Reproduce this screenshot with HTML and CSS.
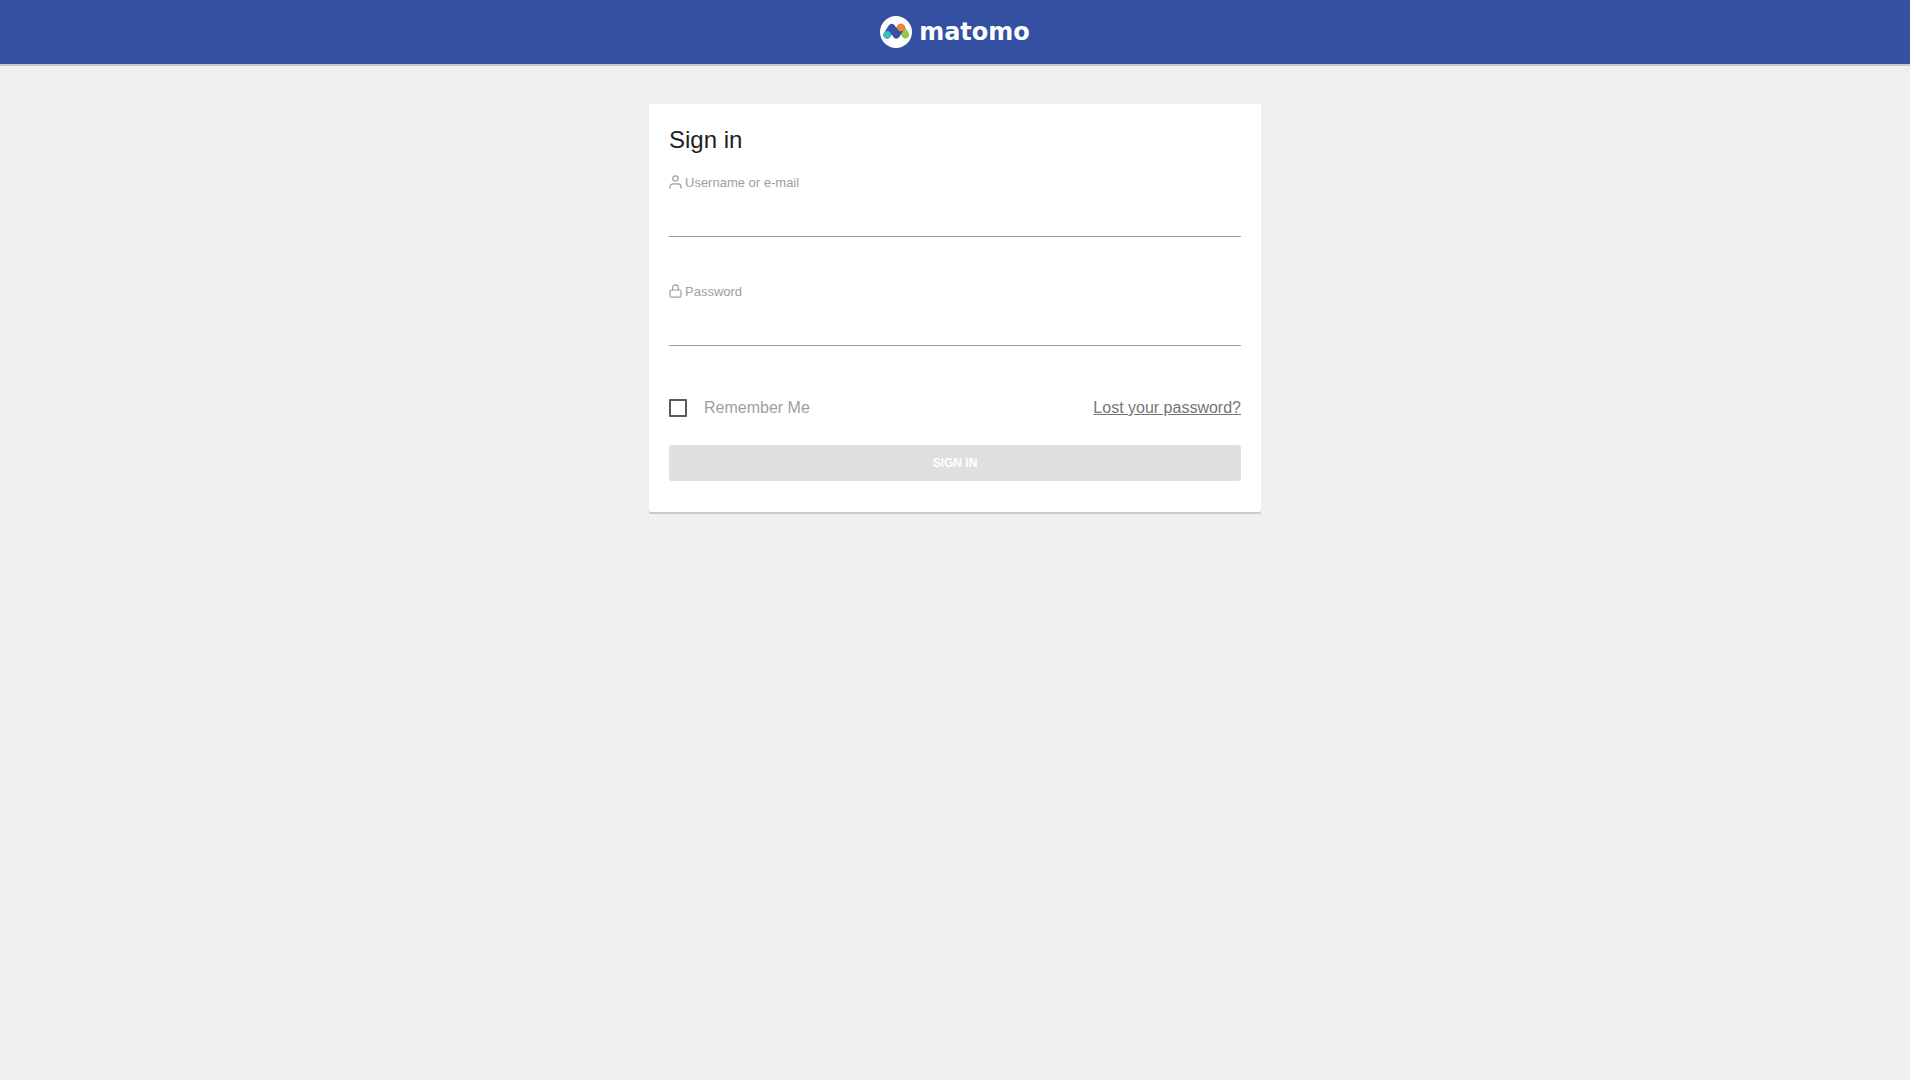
FILE: index.html
```html
<!DOCTYPE html>
<html lang="en">
<head>
  <meta charset="UTF-8">
  <meta name="viewport" content="width=device-width, initial-scale=1.0">
  <title>Sign in - Matomo</title>
  <link rel="stylesheet" href="styles.css">
</head>
<body>
  <header class="navbar">
    <a href="#" class="brand">
      <svg class="brand-mark" viewBox="0 0 32 32" aria-hidden="true">
        <circle cx="16" cy="16" r="16" fill="#fff"/>
        <g fill="none" stroke-width="7.4" stroke-linecap="round" stroke-linejoin="round">
          <path d="M20.9 11.6L25.4 18.8" stroke="#95c748"/>
          <path d="M7.2 18.8L11.8 11.6L16.3 18.8L20.9 11.6" stroke="#3450a3"/>
        </g>
        <circle cx="7.2" cy="18.8" r="3.8" fill="#35bfc0"/>
        <circle cx="20.9" cy="11.6" r="3.8" fill="#f38334"/>
      </svg>
      <span class="brand-name">matomo</span>
    </a>
  </header>

  <main class="login">
    <form class="card">
      <h1>Sign in</h1>

      <div class="field">
        <label for="login_form_login">
          <svg class="icon" viewBox="0 0 14 14" aria-hidden="true">
            <circle cx="6.5" cy="3.5" r="2.7"/>
            <path d="M1 13.2V12a3.2 3.2 0 0 1 3.2-3.2h4.6A3.2 3.2 0 0 1 12 12v1.2"/>
          </svg>
          Username or e-mail
        </label>
        <input type="text" id="login_form_login" name="form_login" autocomplete="username">
      </div>

      <div class="field">
        <label for="login_form_password">
          <svg class="icon" viewBox="0 0 14 14" aria-hidden="true">
            <rect x="1" y="6" width="11" height="7.2" rx="1.5"/>
            <path d="M3.7 6V3.6a2.8 2.8 0 0 1 5.6 0V6"/>
          </svg>
          Password
        </label>
        <input type="password" id="login_form_password" name="form_password" autocomplete="current-password">
      </div>

      <div class="options">
        <label class="remember">
          <input type="checkbox" name="form_rememberme">
          Remember Me
        </label>
        <a href="#" class="lost">Lost your password?</a>
      </div>

      <button type="submit" class="btn" disabled>Sign in</button>
    </form>
  </main>
</body>
</html>
```

FILE: styles.css
```css
* {
  box-sizing: border-box;
}

html {
  background: #fff;
}

/* white gutter on the right edge */
body {
  margin: 0 10px 0 0;
  min-height: 100vh;
  background: #edeff1;
  color: #212121;
  font-family: "Liberation Sans", Arial, sans-serif;
  font-size: 16px;
}

.navbar {
  display: flex;
  align-items: center;
  justify-content: center;
  height: 64px;
  background: #3450a3;
  box-shadow: 0 2px 0 #c6c7c8;
}

.brand {
  display: flex;
  align-items: center;
  gap: 7px;
  color: #fff;
  text-decoration: none;
}

.brand-mark {
  width: 32px;
  height: 32px;
}

.brand-name {
  font-family: "DejaVu Sans", sans-serif;
  font-size: 24px;
  font-weight: bold;
  line-height: 24px;
}

.login {
  padding: 40px 20px;
}

.card {
  max-width: 612px;
  margin: 0 auto;
  padding: 20px 20px 31px;
  background: #fff;
  border-radius: 2px;
  box-shadow: 0 2px 0 #c9cacb;
}

h1 {
  margin: 0 0 16px;
  font-size: 24px;
  font-weight: normal;
  line-height: 32px;
}

.field {
  margin-bottom: 44px;
}

.field label {
  display: flex;
  align-items: center;
  gap: 2px;
  height: 20px;
  color: #9e9e9e;
  font-size: 13px;
}

.icon {
  width: 14px;
  height: 14px;
  fill: none;
  stroke: #9e9e9e;
  stroke-width: 1.2;
  stroke-linecap: round;
  stroke-linejoin: round;
}

.field input {
  display: block;
  width: 100%;
  height: 45px;
  padding: 0;
  border: none;
  border-bottom: 1px solid #9e9e9e;
  outline: none;
  background: transparent;
  font: inherit;
}

.options {
  display: flex;
  align-items: center;
  justify-content: space-between;
  padding-top: 5px;
  margin-bottom: 24px;
  line-height: 26px;
}

.remember {
  display: flex;
  align-items: center;
  gap: 17px;
  color: #9e9e9e;
}

.remember input {
  appearance: none;
  width: 18px;
  height: 18px;
  margin: 0;
  border: 2px solid #5a5a5a;
  border-radius: 1px;
}

.remember input:checked {
  background: #3450a3;
}

.lost {
  color: #757575;
}

.btn {
  width: 100%;
  height: 36px;
  border: none;
  border-radius: 3px;
  background: #dfdfdf;
  color: #fff;
  font-family: inherit;
  font-size: 12px;
  font-weight: bold;
  text-transform: uppercase;
}
```
